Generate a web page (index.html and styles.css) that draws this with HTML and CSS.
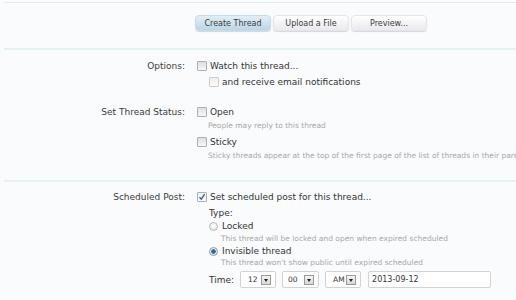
FILE: index.html
```html
<!DOCTYPE html>
<html>
<head>
    <meta charset="utf-8">
    <title>Create Thread</title>
    <link rel="stylesheet" href="styles.css">
</head>
<body>
    <div class="rule rule-top"></div>

    <div class="submit-row">
        <button class="button button-primary">Create Thread</button>
        <button class="button">Upload a File</button>
        <button class="button">Preview...</button>
    </div>

    <div class="rule rule-thick"></div>

    <dl class="ctrl-unit unit-options">
        <dt>Options:</dt>
        <dd>
            <div class="check-line"><span class="checkbox"></span>Watch this thread...</div>
            <div class="check-line sub"><span class="checkbox faint"></span>and receive email notifications</div>
        </dd>
    </dl>

    <dl class="ctrl-unit unit-status">
        <dt>Set Thread Status:</dt>
        <dd>
            <div class="check-line"><span class="checkbox"></span>Open</div>
            <div class="hint">People may reply to this thread</div>
            <div class="check-line spaced"><span class="checkbox"></span>Sticky</div>
            <div class="hint nowrap">Sticky threads appear at the top of the first page of the list of threads in their parent forum</div>
        </dd>
    </dl>

    <div class="rule rule-thick rule-mid"></div>

    <dl class="ctrl-unit unit-schedule">
        <dt>Scheduled Post:</dt>
        <dd>
            <div class="check-line"><span class="checkbox checked"><svg width="8" height="8" viewBox="0 0 8 8"><path d="M1.5 4.2 L3.3 6.2 L6.6 1.2" fill="none" stroke="#2a5d9a" stroke-width="1.3"/></svg></span>Set scheduled post for this thread...</div>
            <div class="schedule-options">
                <div class="type-label">Type:</div>
                <div class="radio-line"><span class="radio"></span>Locked</div>
                <div class="hint radio-hint">This thread will be locked and open when expired scheduled</div>
                <div class="radio-line"><span class="radio selected"></span>Invisible thread</div>
                <div class="hint radio-hint">This thread won't show public until expired scheduled</div>
                <div class="time-row">
                    <span class="time-label">Time:</span>
                    <span class="select-box"><span>12</span><span class="select-arrow"></span></span>
                    <span class="select-box"><span>00</span><span class="select-arrow"></span></span>
                    <span class="select-box"><span>AM</span><span class="select-arrow"></span></span>
                    <span class="date-input">2013-09-12</span>
                </div>
            </div>
        </dd>
    </dl>
</body>
</html>
```

FILE: styles.css
```css
body {
    margin: 0;
    background: #fafbfd;
    font-family: "DejaVu Sans", Verdana, sans-serif;
    font-size: 9px;
    color: #333;
    overflow: hidden;
}

.rule {
    margin-left: 4px;
}

.rule-top {
    margin-top: 2px;
    border-top: 1px solid #e3ebee;
}

.rule-thick {
    border-top: 2px solid #e4f2f2;
}

.rule-mid {
    margin-top: 18px;
}

/* submit buttons */

.submit-row {
    display: flex;
    gap: 2px;
    padding: 12px 0 0 195px;
    height: 33px;
}

.button {
    font-family: "DejaVu Sans", Verdana, sans-serif;
    font-size: 8px;
    color: #3a3a3a;
    height: 16px;
    width: 76px;
    padding: 0;
    border: 1px solid #e4e4ea;
    border-radius: 4px;
    background: linear-gradient(#ffffff, #e9e9ef);
    box-shadow: 0 1px 1px rgba(0, 0, 0, 0.15);
}

.button-primary {
    border-color: #c6dbe9;
    background: linear-gradient(#e3eef6, #bcd6e9);
}

/* form units */

.ctrl-unit {
    display: flex;
    margin: 0;
}

.ctrl-unit dt {
    flex-shrink: 0;
    width: 185px;
    text-align: right;
    line-height: 16px;
    color: #3a3a3a;
}

.ctrl-unit dd {
    margin: 0 0 0 12px;
    min-width: 0;
    overflow: hidden;
}

.unit-options {
    padding-top: 8px;
}

.unit-status {
    margin-top: 14px;
}

.unit-schedule {
    padding-top: 7px;
}

.check-line {
    display: flex;
    align-items: center;
    line-height: 16px;
    white-space: nowrap;
}

.check-line.sub {
    padding-left: 12px;
}

.check-line.spaced {
    margin-top: 2px;
}

.checkbox {
    display: inline-flex;
    align-items: center;
    justify-content: center;
    flex-shrink: 0;
    box-sizing: border-box;
    width: 10px;
    height: 10px;
    margin-right: 3px;
    border: 1px solid #b0b0b0;
    border-radius: 1px;
    background: linear-gradient(#dedede, #f8f8f8);
}

.checkbox.faint {
    border-color: #cccccc;
    background: linear-gradient(#eeeeee, #fcfcfc);
}

.checkbox.checked {
    background: linear-gradient(#f0f0f0, #fdfdfd);
}

.hint {
    font-size: 7.5px;
    color: #a8a8a8;
    line-height: 12px;
    padding-left: 11px;
}

.nowrap {
    white-space: nowrap;
}

/* scheduled post */

.schedule-options {
    margin-top: 2px;
    padding-left: 12px;
}

.type-label {
    line-height: 13px;
}

.radio-line {
    display: flex;
    align-items: center;
    line-height: 13px;
}

.unit-schedule .radio-line + .hint + .radio-line {
    line-height: 12px;
}

.radio {
    box-sizing: border-box;
    width: 9px;
    height: 9px;
    margin-right: 4px;
    border: 1px solid #b8b8b8;
    border-radius: 50%;
    background: radial-gradient(circle at 50% 35%, #ffffff, #dcdcdc);
}

.radio.selected {
    border-color: #8a9aa8;
    background: radial-gradient(circle, #2d6f8f 0, #2d6f8f 2px, #e8eef2 2.5px);
}

.radio-hint {
    padding-left: 12px;
}

.time-row {
    display: flex;
    align-items: center;
    margin-top: 2px;
}

.time-label {
    margin-right: 6px;
}

.select-box {
    display: flex;
    align-items: center;
    justify-content: space-between;
    box-sizing: border-box;
    width: 36px;
    height: 17px;
    margin-right: 7px;
    padding: 0 4px 0 7px;
    border: 1px solid #d2d2d2;
    border-radius: 2px;
    background: #fff;
    font-size: 7.5px;
}

.select-box:nth-of-type(2) {
    margin-right: 6px;
}

.select-box:nth-of-type(3) {
    width: 37px;
    margin-right: 6px;
    padding-left: 5px;
}

.select-arrow {
    position: relative;
    box-sizing: border-box;
    width: 10px;
    height: 10px;
    border: 1px solid #9a9a9a;
    background: linear-gradient(#f4f4f4, #d8d8d8);
}

.select-arrow::after {
    content: "";
    position: absolute;
    left: 2px;
    top: 3px;
    border-left: 2px solid transparent;
    border-right: 2px solid transparent;
    border-top: 3px solid #222;
}

.date-input {
    box-sizing: border-box;
    width: 123px;
    height: 17px;
    line-height: 15px;
    padding-left: 3px;
    border: 1px solid #d2d2d2;
    border-radius: 2px;
    background: #fff;
    font-size: 8px;
}
```
